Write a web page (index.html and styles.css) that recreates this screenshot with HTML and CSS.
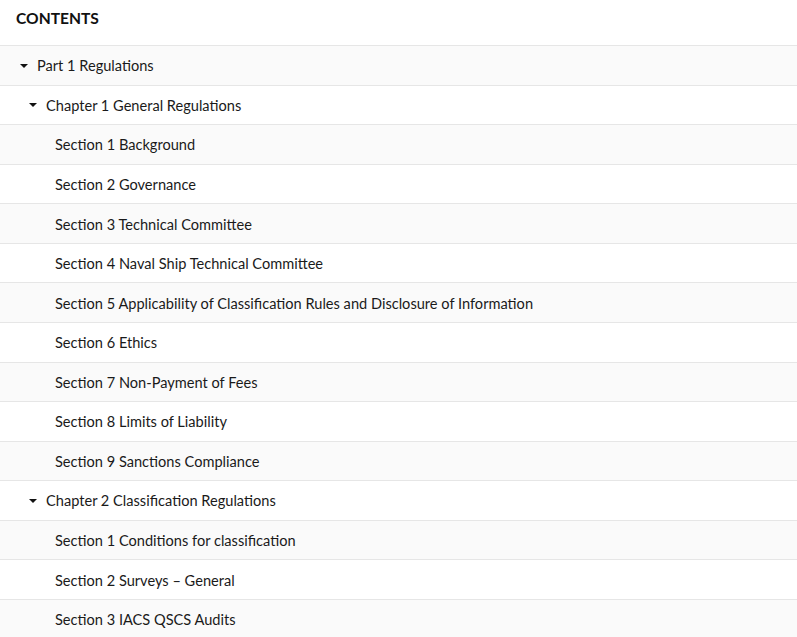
FILE: index.html
```html
<!DOCTYPE html>
<html lang="en">
<head>
    <meta charset="UTF-8">
    <title>Contents</title>
    <link rel="stylesheet" href="styles.css">
</head>
<body>
    <div class="toc">
        <div class="toc-title">CONTENTS</div>
        <ul class="toc-list">
            <li class="toc-row level-1"><span class="caret"></span>Part 1 Regulations</li>
            <li class="toc-row level-2"><span class="caret"></span>Chapter 1 General Regulations</li>
            <li class="toc-row level-3">Section 1 Background</li>
            <li class="toc-row level-3">Section 2 Governance</li>
            <li class="toc-row level-3">Section 3 Technical Committee</li>
            <li class="toc-row level-3">Section 4 Naval Ship Technical Committee</li>
            <li class="toc-row level-3">Section 5 Applicability of Classification Rules and Disclosure of Information</li>
            <li class="toc-row level-3">Section 6 Ethics</li>
            <li class="toc-row level-3">Section 7 Non-Payment of Fees</li>
            <li class="toc-row level-3">Section 8 Limits of Liability</li>
            <li class="toc-row level-3">Section 9 Sanctions Compliance</li>
            <li class="toc-row level-2"><span class="caret"></span>Chapter 2 Classification Regulations</li>
            <li class="toc-row level-3">Section 1 Conditions for classification</li>
            <li class="toc-row level-3">Section 2 Surveys – General</li>
            <li class="toc-row level-3">Section 3 IACS QSCS Audits</li>
        </ul>
    </div>
</body>
</html>
```

FILE: styles.css
```css
body {
    margin: 0;
    padding: 0;
    background-color: #fff;
    font-family: Lato, "Open Sans", sans-serif;
    color: #1a1a1a;
}
.toc {
    width: 797px;
}
.toc-title {
    height: 45px;
    padding: 0 16px 9px;
    display: flex;
    align-items: center;
    font-size: 15.6px;
    font-weight: bold;
    color: #111;
    box-sizing: border-box;
}
.toc-list {
    list-style: none;
    margin: 0;
    padding: 0;
}
.toc-row {
    height: 39.57px;
    box-sizing: border-box;
    border-top: 1px solid #e6e6e6;
    display: flex;
    align-items: center;
    padding-top: 1px;
    font-size: 14.6px;
}
.toc-row:nth-child(odd) {
    background-color: #fafafa;
}
.level-1 { padding-left: 20px; }
.level-2 { padding-left: 29px; }
.level-3 { padding-left: 55px; }
.caret {
    width: 0;
    height: 0;
    border-left: 4px solid transparent;
    border-right: 4px solid transparent;
    border-top: 4px solid #111;
    margin-right: 9px;
}
```
